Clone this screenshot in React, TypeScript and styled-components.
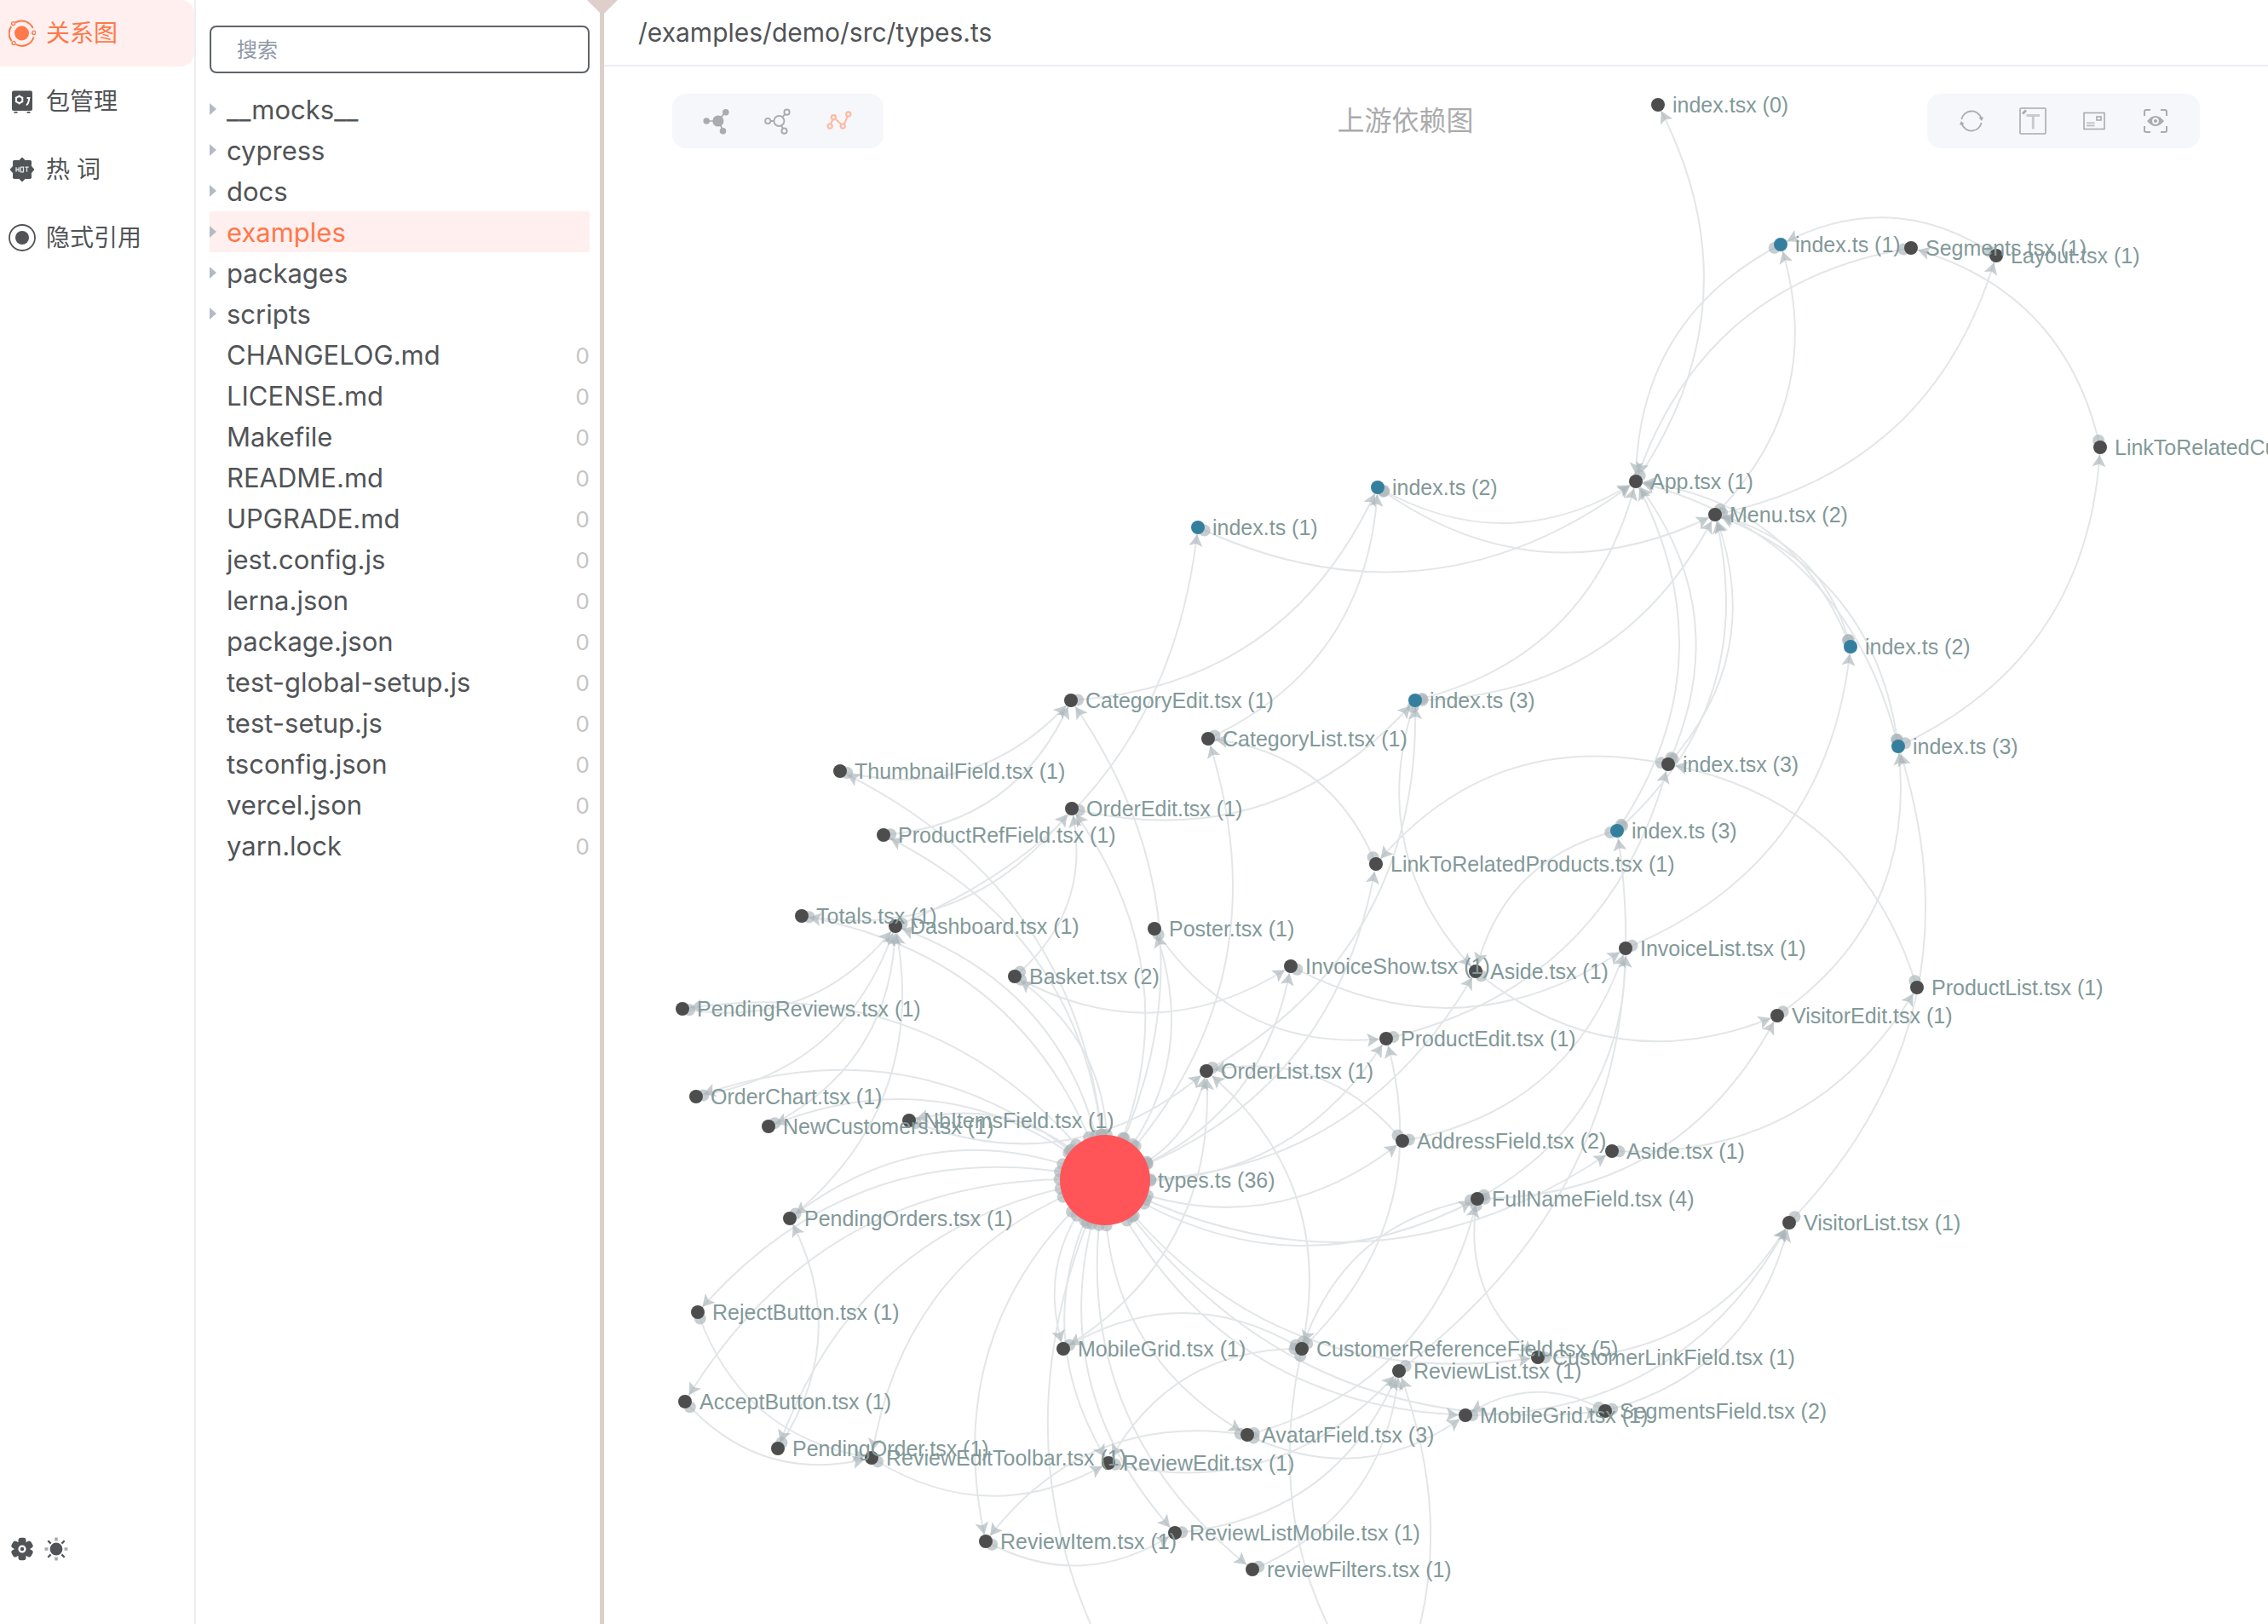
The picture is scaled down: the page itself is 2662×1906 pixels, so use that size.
import React from 'react';
import styled, { createGlobalStyle } from 'styled-components';

const colors = {
  ink: '#515457',
  accent: '#ff7849',
  accentSoft: '#ffefef',
  line: '#eceef6',
  muted: '#aaabac',
  panel: '#f5f7fb',
  divider: '#decfcc',
};

const sans = `Inter, "Noto Sans CJK SC", sans-serif`;

const GlobalStyle = createGlobalStyle`
  *, *::before, *::after { box-sizing: border-box; }
  html, body { margin: 0; padding: 0; background: #ffffff; }
  body { font-family: ${sans}; color: ${colors.ink}; }
  button, input { font: inherit; color: inherit; }
`;

const Page = styled.div`
  display: flex;
  height: 100vh;
  overflow: hidden;
`;

const Sidebar = styled.nav`
  display: flex;
  flex-direction: column;
  justify-content: space-between;
  flex: 0 0 230px;
  border-right: 2px solid ${colors.line};
`;

const NavList = styled.div`
  display: flex;
  flex-direction: column;
  gap: 2px;
`;

const NavLink = styled.a<{ $active?: boolean }>`
  display: flex;
  align-items: center;
  gap: 12px;
  height: 78px;
  padding-left: 10px;
  border-radius: 0 16px 16px 0;
  background: ${(p) => (p.$active ? colors.accentSoft : 'transparent')};
  color: ${(p) => (p.$active ? colors.accent : colors.ink)};
  font-size: 28px;
  line-height: 40px;
  text-decoration: none;
`;

const SidebarFooter = styled.div`
  display: flex;
  gap: 8px;
  padding: 0 0 72px 10px;
`;

const IconButton = styled.button<{ $active?: boolean }>`
  display: flex;
  align-items: center;
  justify-content: center;
  width: 32px;
  height: 32px;
  padding: 0;
  border: 0;
  background: none;
  color: inherit;
  cursor: pointer;
`;

const Explorer = styled.aside`
  flex: 0 0 474px;
  padding: 30px 12px 0 16px;
`;

const SearchInput = styled.input`
  display: block;
  width: 100%;
  height: 56px;
  margin-bottom: 18px;
  padding: 0 30px;
  border: 2px solid #606469;
  border-radius: 8px;
  outline: none;
  background: #ffffff;
  font-size: 24px;
  line-height: 32px;
  &::placeholder {
    color: #8f98a6;
    opacity: 1;
  }
`;

const Tree = styled.ul`
  margin: 0;
  padding: 0;
  list-style: none;
`;

const TreeItem = styled.button<{ $active?: boolean }>`
  display: flex;
  align-items: center;
  gap: 12px;
  width: 100%;
  height: 48px;
  padding: 0;
  border: 0;
  background: ${(p) => (p.$active ? colors.accentSoft : 'transparent')};
  color: ${(p) => (p.$active ? colors.accent : colors.ink)};
  font-size: 31px;
  line-height: 40px;
  text-align: left;
  cursor: pointer;
`;

const Caret = styled.span<{ $visible: boolean }>`
  flex: none;
  width: 8px;
  border-top: 7px solid transparent;
  border-bottom: 7px solid transparent;
  border-left: 8px solid ${(p) => (p.$visible ? '#b3bac6' : 'transparent')};
`;

const ItemName = styled.span`
  flex: 1;
  padding-top: 2px;
`;

const RefCount = styled.span`
  padding-top: 4px;
  color: #c4c5c7;
  font-size: 26px;
`;

const Splitter = styled.div`
  position: relative;
  flex: 0 0 5px;
  background: ${colors.divider};
  cursor: col-resize;
`;

const SplitterHandle = styled.span`
  position: absolute;
  top: 0;
  left: 50%;
  transform: translateX(-50%);
  border-left: 18px solid transparent;
  border-right: 18px solid transparent;
  border-top: 18px solid ${colors.divider};
`;

const Main = styled.main`
  display: flex;
  flex: 1;
  flex-direction: column;
  min-width: 0;
`;

const PathBar = styled.header`
  display: flex;
  align-items: center;
  height: 78px;
  padding: 0 40px;
  border-bottom: 2px solid ${colors.line};
  font-size: 30px;
  line-height: 40px;
`;

const Stage = styled.section`
  position: relative;
  flex: 1;
  min-height: 0;
  overflow: hidden;
`;

const Graph = styled.svg`
  position: absolute;
  inset: 0;
  width: 100%;
  height: 100%;
`;

const StageBar = styled.div`
  position: relative;
  display: flex;
  align-items: center;
  justify-content: space-between;
  padding: 32px 80px;
  pointer-events: none;
`;

const Toolbar = styled.div`
  display: flex;
  align-items: center;
  gap: 40px;
  height: 64px;
  padding: 0 36px;
  border-radius: 16px;
  background: ${colors.panel};
  color: ${colors.muted};
  pointer-events: auto;
`;

const ToolButton = styled(IconButton)`
  color: ${(p) => (p.$active ? '#ffb9a2' : 'inherit')};
`;

const StageTitle = styled.h1`
  margin: 0;
  color: ${colors.muted};
  font-size: 32px;
  font-weight: 400;
  line-height: 48px;
`;

const Curve = styled.path`
  fill: none;
  stroke: #e3e6e8;
  stroke-width: 2px;
`;

const EdgeMark = styled.path`
  fill: #a9b3b9;
  fill-opacity: 0.65;
`;

const EdgeDot = styled.circle`
  fill: #a9b3b9;
  fill-opacity: 0.65;
`;

const NodeLabel = styled.text`
  fill: #829999;
  font-family: "Liberation Sans", Arial, sans-serif;
  font-size: 25px;
`;

/* ---------- icons ---------- */

const RelationIcon = () => (
  <svg width="32" height="32" viewBox="0 0 32 32" aria-hidden="true">
    <circle cx="15.5" cy="16" r="8.5" fill="currentColor" />
    <path
      d="M8 3.4A14.6 14.6 0 0 1 28.6 10M29.6 20.5A14.6 14.6 0 0 1 8.5 29M3.6 25.2A14.6 14.6 0 0 1 3.2 8"
      fill="none"
      stroke="currentColor"
      strokeWidth="2"
    />
    <circle cx="5.6" cy="4.6" r="2" fill="none" stroke="currentColor" strokeWidth="1.4" />
    <circle cx="29.8" cy="15.4" r="2" fill="none" stroke="currentColor" strokeWidth="1.4" />
    <circle cx="6" cy="27.6" r="2" fill="none" stroke="currentColor" strokeWidth="1.4" />
  </svg>
);

const PackageIcon = () => (
  <svg width="32" height="32" viewBox="0 0 32 32" aria-hidden="true">
    <path d="M6 3.5h20q2 0 2 2v19.500q0 2-2 2H6q-2 0-2-2V5.500q0-2 2-2z" fill="currentColor" />
    <path d="M6.500 28h4v1.800h-4zM21.500 28h4v1.800h-4z" fill="currentColor" />
    <circle cx="12.600" cy="14" r="3.800" fill="none" stroke="#fff" strokeWidth="2" />
    <path
      d="M12.600 8.600v1.600M12.600 17.800v1.600M8 11.200l1.300.8M15.900 16l1.300.8M8 16.800l1.300-.8M15.900 12l1.300-.8"
      stroke="#fff"
      strokeWidth="1.600"
    />
    <path d="M21.500 12h2.800l-.6 3.500q-.6 3.500-2.700 5" fill="none" stroke="#fff" strokeWidth="2" />
  </svg>
);

const HotIcon = () => (
  <svg width="32" height="32" viewBox="0 0 32 32" aria-hidden="true">
    <path
      d="M16 2l3.600 3.600 5.600-.2q1.400 0 1.400 1.400l-.2 5L30 16l-3.600 4.200.2 5q0 1.400-1.400 1.400l-5.600-.2L16 30l-3.600-3.600-5.600.2q-1.400 0-1.400-1.400l.2-5L2 16l3.600-4.200-.2-5q0-1.400 1.400-1.400l5.600.2z"
      fill="currentColor"
      stroke="currentColor"
      strokeLinejoin="round"
    />
    <path
      d="M9 13.200v5.600M12.200 13.200v5.600M9 16h3.200M14.300 13.200h3.200v5.600h-3.200zM19.300 13.200h4.400M21.500 13.200v5.600"
      fill="none"
      stroke="#fff"
      strokeOpacity="0.850"
      strokeWidth="1.300"
    />
  </svg>
);

const TargetIcon = () => (
  <svg width="32" height="32" viewBox="0 0 32 32" aria-hidden="true">
    <circle cx="16" cy="16" r="8" fill="currentColor" />
    <circle cx="16" cy="16" r="15" fill="none" stroke="currentColor" strokeWidth="1.800" />
  </svg>
);

const GearIcon = () => (
  <svg width="32" height="32" viewBox="0 0 32 32" aria-hidden="true">
    <circle cx="16" cy="16" r="9" fill="currentColor" />
    {[0, 60, 120, 180, 240, 300].map((a) => (
      <rect key={a} x="11.500" y="2.800" width="9" height="8" rx="3" fill="currentColor" transform={`rotate(${a} 16 16)`} />
    ))}
    <circle cx="16" cy="16" r="3.400" fill="currentColor" stroke="#fff" strokeWidth="2.400" />
  </svg>
);

const SunIcon = () => (
  <svg width="32" height="32" viewBox="0 0 32 32" aria-hidden="true">
    <circle cx="16" cy="16" r="7.400" fill="currentColor" />
    <path d="M16 2.500v4M16 25.500v4M2.500 16h4M25.500 16h4" stroke="currentColor" strokeOpacity="0.500" strokeWidth="3.600" />
    <path d="M6.300 6.300l3.300 3.300M22.400 22.400l3.300 3.300M6.300 25.700l3.300-3.300M22.400 9.600l3.300-3.300" stroke="currentColor" strokeWidth="2.200" />
  </svg>
);

const ForceFilledIcon = () => (
  <svg width="34" height="34" viewBox="0 0 34 34" aria-hidden="true">
    <path d="M4 17h15L28 6M19 17l7 13" fill="none" stroke="currentColor" strokeWidth="1.800" />
    <circle cx="19" cy="17" r="7" fill="currentColor" />
    <circle cx="4.500" cy="17" r="4" fill="currentColor" />
    <circle cx="28.500" cy="6" r="4" fill="currentColor" />
    <circle cx="25" cy="29.500" r="4" fill="currentColor" />
  </svg>
);

const ForceOutlineIcon = () => (
  <svg width="34" height="34" viewBox="0 0 34 34" fill="none" stroke="currentColor" strokeWidth="2" aria-hidden="true">
    <path d="M8 17h4M23 11.700l3-3.300M21.500 23l2 3.600" />
    <circle cx="18.500" cy="17" r="6.400" />
    <circle cx="4.500" cy="17" r="3.300" />
    <circle cx="28.200" cy="6" r="3.300" />
    <circle cx="25" cy="29.400" r="3.300" />
  </svg>
);

const CircularIcon = () => (
  <svg width="34" height="34" viewBox="0 0 34 34" fill="none" stroke="currentColor" strokeWidth="2.200" aria-hidden="true">
    <path d="M6.500 20.500L9 15M12.500 14.500l7 6.500M23.500 20.500L27 11.500" />
    <circle cx="5.500" cy="23.500" r="2.800" />
    <circle cx="10" cy="12.500" r="2.800" />
    <circle cx="21.500" cy="23.500" r="2.800" />
    <circle cx="28.500" cy="8.500" r="2.800" />
  </svg>
);

const RefreshIcon = () => (
  <svg width="32" height="32" viewBox="0 0 32 32" aria-hidden="true">
    <path d="M4.300 14A12 12 0 0 1 27.400 12.600M27.700 18A12 12 0 0 1 4.600 19.400" fill="none" stroke="currentColor" strokeWidth="1.800" />
    <path d="M24.500 12.300l5.500-1-1.800 4.800zM7.500 19.700l-5.500 1 1.800-4.800z" fill="currentColor" />
  </svg>
);

const TextBoxIcon = () => (
  <svg width="32" height="32" viewBox="0 0 32 32" fill="none" stroke="currentColor" aria-hidden="true">
    <rect x="1" y="1" width="30" height="30" rx="1" strokeWidth="1.600" />
    <path d="M4 7.500L8 3.500" strokeWidth="3" />
    <path d="M8.500 9.500h15.500M16.300 9.500v16" strokeWidth="3" strokeOpacity="0.600" />
  </svg>
);

const CardIcon = () => (
  <svg width="32" height="32" viewBox="0 0 32 32" fill="none" stroke="currentColor" aria-hidden="true">
    <rect x="4" y="6.500" width="24" height="19" strokeWidth="1.600" />
    <rect x="19" y="11" width="5" height="4" strokeWidth="1.600" />
    <path d="M7 18.200h9.500M7 21.400h9.500" strokeWidth="1.600" strokeOpacity="0.800" />
  </svg>
);

const FocusEyeIcon = () => (
  <svg width="32" height="32" viewBox="0 0 32 32" fill="none" stroke="currentColor" aria-hidden="true">
    <path d="M3 10V5q0-2 2-2h5M22 3h5q2 0 2 2v5M29 22v5q0 2-2 2h-5M10 29H5q-2 0-2-2v-5" strokeWidth="2" />
    <path d="M6 16q10-12 20 0q-10 12-20 0z" fill="currentColor" stroke="none" />
    <circle cx="16" cy="16" r="3" stroke={colors.panel} strokeWidth="1.800" />
  </svg>
);

/* ---------- dependency graph ---------- */

type GraphNode = { x: number; y: number; label: string; kind?: 'index' | 'root' };

const nodes: Record<string, GraphNode> = {
  entry: { x: 1946, y: 123, label: 'index.tsx (0)' },
  layoutIndex: { x: 2090, y: 287, label: 'index.ts (1)', kind: 'index' },
  segments: { x: 2243, y: 291, label: 'Segments.tsx (1)' },
  layout: { x: 2343, y: 300, label: 'Layout.tsx (1)' },
  linkCustomers: { x: 2465, y: 525, label: 'LinkToRelatedCustomers.tsx (1)' },
  app: { x: 1920, y: 565, label: 'App.tsx (1)' },
  menu: { x: 2013, y: 604, label: 'Menu.tsx (2)' },
  invoicesIndex: { x: 2172, y: 759, label: 'index.ts (2)', kind: 'index' },
  visitorsIndex: { x: 2228, y: 876, label: 'index.ts (3)', kind: 'index' },
  productsIndex: { x: 1958, y: 897, label: 'index.tsx (3)' },
  categoriesIndex: { x: 1617, y: 572, label: 'index.ts (2)', kind: 'index' },
  dashboardIndex: { x: 1406, y: 619, label: 'index.ts (1)', kind: 'index' },
  ordersIndex: { x: 1661, y: 822, label: 'index.ts (3)', kind: 'index' },
  categoryList: { x: 1418, y: 867, label: 'CategoryList.tsx (1)' },
  reviewsIndex: { x: 1898, y: 975, label: 'index.ts (3)', kind: 'index' },
  linkProducts: { x: 1615, y: 1014, label: 'LinkToRelatedProducts.tsx (1)' },
  poster: { x: 1355, y: 1090, label: 'Poster.tsx (1)' },
  invoiceShow: { x: 1515, y: 1134, label: 'InvoiceShow.tsx (1)' },
  orderAside: { x: 1732, y: 1140, label: 'Aside.tsx (1)' },
  invoiceList: { x: 1908, y: 1113, label: 'InvoiceList.tsx (1)' },
  visitorEdit: { x: 2086, y: 1192, label: 'VisitorEdit.tsx (1)' },
  productList: { x: 2250, y: 1159, label: 'ProductList.tsx (1)' },
  categoryEdit: { x: 1257, y: 822, label: 'CategoryEdit.tsx (1)' },
  thumbnail: { x: 986, y: 905, label: 'ThumbnailField.tsx (1)' },
  productRef: { x: 1037, y: 980, label: 'ProductRefField.tsx (1)' },
  orderEdit: { x: 1258, y: 949, label: 'OrderEdit.tsx (1)' },
  totals: { x: 941, y: 1075, label: 'Totals.tsx (1)' },
  dashboard: { x: 1051, y: 1087, label: 'Dashboard.tsx (1)' },
  basket: { x: 1191, y: 1146, label: 'Basket.tsx (2)' },
  pendingReviews: { x: 801, y: 1184, label: 'PendingReviews.tsx (1)' },
  orderChart: { x: 817, y: 1287, label: 'OrderChart.tsx (1)' },
  newCustomers: { x: 902, y: 1322, label: 'NewCustomers.tsx (1)' },
  nbItems: { x: 1067, y: 1315, label: 'NbItemsField.tsx (1)' },
  pendingOrders: { x: 927, y: 1430, label: 'PendingOrders.tsx (1)' },
  orderList: { x: 1416, y: 1257, label: 'OrderList.tsx (1)' },
  productEdit: { x: 1627, y: 1219, label: 'ProductEdit.tsx (1)' },
  address: { x: 1646, y: 1339, label: 'AddressField.tsx (2)' },
  visitorAside: { x: 1892, y: 1351, label: 'Aside.tsx (1)' },
  fullName: { x: 1734, y: 1407, label: 'FullNameField.tsx (4)' },
  visitorList: { x: 2100, y: 1435, label: 'VisitorList.tsx (1)' },
  customerRef: { x: 1528, y: 1583, label: 'CustomerReferenceField.tsx (5)' },
  customerLink: { x: 1805, y: 1593, label: 'CustomerLinkField.tsx (1)' },
  reviewList: { x: 1642, y: 1609, label: 'ReviewList.tsx (1)' },
  visitorGrid: { x: 1720, y: 1661, label: 'MobileGrid.tsx (1)' },
  segmentsField: { x: 1884, y: 1656, label: 'SegmentsField.tsx (2)' },
  avatar: { x: 1464, y: 1684, label: 'AvatarField.tsx (3)' },
  reviewEdit: { x: 1301, y: 1717, label: 'ReviewEdit.tsx (1)' },
  reviewListMobile: { x: 1379, y: 1799, label: 'ReviewListMobile.tsx (1)' },
  reviewFilters: { x: 1470, y: 1842, label: 'reviewFilters.tsx (1)' },
  reviewItem: { x: 1157, y: 1809, label: 'ReviewItem.tsx (1)' },
  orderGrid: { x: 1248, y: 1583, label: 'MobileGrid.tsx (1)' },
  rejectButton: { x: 819, y: 1540, label: 'RejectButton.tsx (1)' },
  acceptButton: { x: 804, y: 1645, label: 'AcceptButton.tsx (1)' },
  pendingOrder: { x: 913, y: 1700, label: 'PendingOrder.tsx (1)' },
  reviewToolbar: { x: 1023, y: 1711, label: 'ReviewEditToolbar.tsx (1)' },
  bulkAccept: { x: 1372, y: 2060, label: '' },
  bulkReject: { x: 1545, y: 2130, label: '' },
  starRating: { x: 1695, y: 2078, label: '' },
  types: { x: 1297, y: 1385, label: 'types.ts (36)', kind: 'root' },
};

const links: [string, string[]][] = [
  ['types', [
    'thumbnail', 'productRef', 'categoryEdit', 'categoryList', 'orderEdit', 'totals', 'dashboard',
    'basket', 'poster', 'pendingReviews', 'orderChart', 'newCustomers', 'nbItems', 'pendingOrders',
    'orderList', 'invoiceShow', 'orderAside', 'linkProducts', 'productEdit', 'address', 'visitorAside',
    'fullName', 'customerLink', 'segmentsField', 'orderGrid', 'visitorGrid', 'avatar', 'reviewEdit',
    'reviewItem', 'reviewListMobile', 'reviewFilters', 'rejectButton', 'acceptButton', 'pendingOrder',
    'reviewToolbar', 'bulkAccept',
  ]],
  ['app', ['entry']],
  ['menu', ['layoutIndex', 'layout']],
  ['layout', ['layoutIndex']],
  ['layoutIndex', ['app']],
  ['segments', ['app']],
  ['linkCustomers', ['segments']],
  ['visitorsIndex', ['linkCustomers', 'app', 'menu']],
  ['invoicesIndex', ['app', 'menu']],
  ['productsIndex', ['app', 'menu', 'linkProducts']],
  ['reviewsIndex', ['app', 'menu', 'orderAside']],
  ['ordersIndex', ['app', 'menu', 'orderAside']],
  ['categoriesIndex', ['app', 'menu']],
  ['dashboardIndex', ['app']],
  ['categoryEdit', ['categoriesIndex']],
  ['categoryList', ['categoriesIndex']],
  ['linkProducts', ['categoryList']],
  ['thumbnail', ['categoryEdit']],
  ['productRef', ['categoryEdit']],
  ['totals', ['orderEdit']],
  ['basket', ['orderEdit', 'invoiceShow']],
  ['orderEdit', ['ordersIndex']],
  ['orderList', ['ordersIndex']],
  ['dashboard', ['dashboardIndex']],
  ['pendingReviews', ['dashboard']],
  ['orderChart', ['dashboard']],
  ['newCustomers', ['dashboard']],
  ['pendingOrders', ['dashboard']],
  ['pendingOrder', ['pendingOrders']],
  ['poster', ['productEdit']],
  ['productEdit', ['productsIndex']],
  ['productList', ['productsIndex']],
  ['invoiceShow', ['invoiceList']],
  ['invoiceList', ['invoicesIndex']],
  ['orderAside', ['visitorEdit']],
  ['visitorEdit', ['visitorsIndex']],
  ['visitorList', ['visitorsIndex']],
  ['visitorAside', ['productList']],
  ['address', ['orderList', 'invoiceList']],
  ['nbItems', ['orderList']],
  ['orderGrid', ['orderList']],
  ['fullName', ['invoiceList', 'visitorEdit', 'customerRef', 'customerLink']],
  ['customerRef', ['orderList', 'productEdit', 'orderGrid', 'reviewEdit', 'starRating']],
  ['customerLink', ['visitorList']],
  ['segmentsField', ['visitorList', 'visitorGrid']],
  ['visitorGrid', ['visitorList']],
  ['reviewList', ['reviewsIndex']],
  ['avatar', ['fullName', 'visitorGrid', 'reviewItem']],
  ['reviewEdit', ['reviewList']],
  ['reviewListMobile', ['reviewList']],
  ['reviewFilters', ['reviewList']],
  ['bulkReject', ['reviewList']],
  ['reviewItem', ['reviewListMobile']],
  ['reviewToolbar', ['reviewEdit']],
  ['rejectButton', ['reviewToolbar']],
  ['acceptButton', ['reviewToolbar']],
];

const PAN = { x: -709, y: -78 };
const CURVENESS = 0.3;
const radiusOf = (n: GraphNode) => (n.kind === 'root' ? 53 : 8);
const fillOf = (n: GraphNode) =>
  n.kind === 'root' ? '#ff5558' : n.kind === 'index' ? '#357f9e' : '#4d4d4d';

function edgeGeometry(a: GraphNode, b: GraphNode) {
  const c = {
    x: (a.x + b.x) / 2 + (a.y - b.y) * CURVENESS,
    y: (a.y + b.y) / 2 + (b.x - a.x) * CURVENESS,
  };
  const at = (t: number) => ({
    x: (1 - t) * (1 - t) * a.x + 2 * t * (1 - t) * c.x + t * t * b.x,
    y: (1 - t) * (1 - t) * a.y + 2 * t * (1 - t) * c.y + t * t * b.y,
  });
  const leave = (n: GraphNode, dir: 1 | -1) => {
    let t = dir === 1 ? 0 : 1;
    let p = at(t);
    while (t >= 0 && t <= 1 && Math.hypot(p.x - n.x, p.y - n.y) < radiusOf(n)) {
      t += dir * 0.002;
      p = at(t);
    }
    return { ...p, t };
  };
  const start = leave(a, 1);
  const end = leave(b, -1);
  const dx = (1 - end.t) * (c.x - a.x) + end.t * (b.x - c.x);
  const dy = (1 - end.t) * (c.y - a.y) + end.t * (b.y - c.y);
  return {
    d: `M${a.x} ${a.y}Q${c.x} ${c.y} ${b.x} ${b.y}`,
    start,
    end,
    angle: (Math.atan2(dy, dx) * 180) / Math.PI,
  };
}

const edges = links.flatMap(([from, targets]) =>
  targets.map((to) => ({ key: `${from}-${to}`, ...edgeGeometry(nodes[from], nodes[to]) })),
);

const DependencyGraph = () => (
  <Graph role="img" aria-label="上游依赖图">
    <g transform={`translate(${PAN.x} ${PAN.y})`}>
      {edges.map((e) => (
        <Curve key={e.key} d={e.d} />
      ))}
      {edges.map((e) => (
        <g key={e.key}>
          <EdgeDot cx={e.start.x} cy={e.start.y} r={7} />
          <EdgeMark d="M0 0L-14 8L-11 0L-14 -8Z" transform={`translate(${e.end.x} ${e.end.y}) rotate(${e.angle})`} />
        </g>
      ))}
      {Object.entries(nodes).map(([id, n]) => (
        <circle key={id} cx={n.x} cy={n.y} r={radiusOf(n)} fill={fillOf(n)} />
      ))}
      {Object.entries(nodes)
        .filter(([, n]) => n.label)
        .map(([id, n]) => (
          <NodeLabel key={id} x={n.x + radiusOf(n) + 9} y={n.y + 9}>
            {n.label}
          </NodeLabel>
        ))}
    </g>
  </Graph>
);

/* ---------- page ---------- */

const navItems = [
  { label: '关系图', icon: <RelationIcon />, active: true },
  { label: '包管理', icon: <PackageIcon /> },
  { label: '热 词', icon: <HotIcon /> },
  { label: '隐式引用', icon: <TargetIcon /> },
];

const folders = ['__mocks__', 'cypress', 'docs', 'examples', 'packages', 'scripts'];
const files = [
  'CHANGELOG.md', 'LICENSE.md', 'Makefile', 'README.md', 'UPGRADE.md', 'jest.config.js', 'lerna.json',
  'package.json', 'test-global-setup.js', 'test-setup.js', 'tsconfig.json', 'vercel.json', 'yarn.lock',
];

export default function App() {
  return (
    <>
      <GlobalStyle />
      <Page>
        <Sidebar>
          <NavList>
            {navItems.map((item) => (
              <NavLink key={item.label} href="#" $active={item.active}>
                {item.icon}
                {item.label}
              </NavLink>
            ))}
          </NavList>
          <SidebarFooter>
            <IconButton type="button" aria-label="设置"><GearIcon /></IconButton>
            <IconButton type="button" aria-label="主题"><SunIcon /></IconButton>
          </SidebarFooter>
        </Sidebar>

        <Explorer>
          <SearchInput type="text" placeholder="搜索" aria-label="搜索" />
          <Tree>
            {folders.map((name) => (
              <li key={name}>
                <TreeItem type="button" $active={name === 'examples'}>
                  <Caret $visible />
                  <ItemName>{name}</ItemName>
                </TreeItem>
              </li>
            ))}
            {files.map((name) => (
              <li key={name}>
                <TreeItem type="button">
                  <Caret $visible={false} />
                  <ItemName>{name}</ItemName>
                  <RefCount>0</RefCount>
                </TreeItem>
              </li>
            ))}
          </Tree>
        </Explorer>

        <Splitter>
          <SplitterHandle />
        </Splitter>

        <Main>
          <PathBar>/examples/demo/src/types.ts</PathBar>
          <Stage>
            <DependencyGraph />
            <StageBar>
              <Toolbar>
                <ToolButton type="button" aria-label="力导向图"><ForceFilledIcon /></ToolButton>
                <ToolButton type="button" aria-label="环形图"><ForceOutlineIcon /></ToolButton>
                <ToolButton type="button" aria-label="曲线" $active><CircularIcon /></ToolButton>
              </Toolbar>
              <StageTitle>上游依赖图</StageTitle>
              <Toolbar>
                <ToolButton type="button" aria-label="刷新"><RefreshIcon /></ToolButton>
                <ToolButton type="button" aria-label="显示名称"><TextBoxIcon /></ToolButton>
                <ToolButton type="button" aria-label="显示卡片"><CardIcon /></ToolButton>
                <ToolButton type="button" aria-label="聚焦"><FocusEyeIcon /></ToolButton>
              </Toolbar>
            </StageBar>
          </Stage>
        </Main>
      </Page>
    </>
  );
}
